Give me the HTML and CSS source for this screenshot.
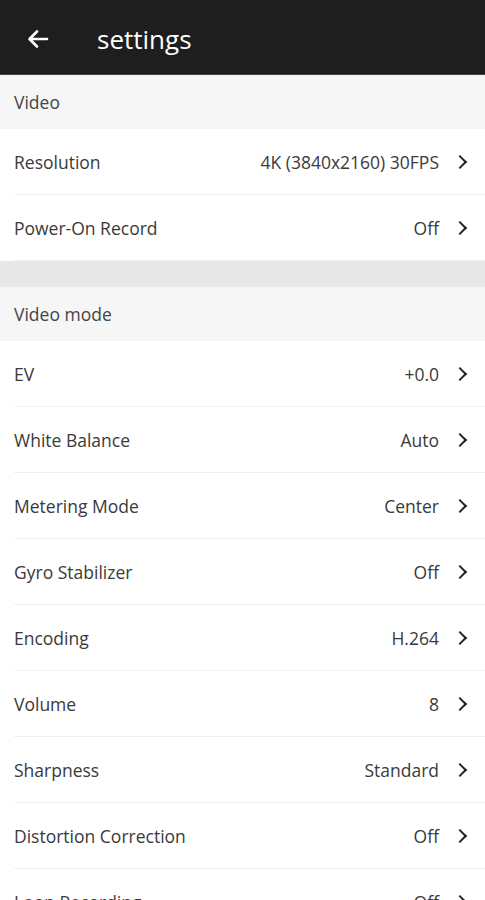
FILE: index.html
```html
<!DOCTYPE html>
<html lang="en">
  <head>
    <meta charset="UTF-8" />
    <meta name="viewport" content="width=device-width, initial-scale=1" />
    <title>settings</title>
    <link rel="stylesheet" href="styles.css">
  </head>
  <body>
    <header>
      <svg class="back" width="24" height="24" viewBox="0 0 24 24">
        <path d="M21 12H4M11 4.5L3.5 12L11 19.5" fill="none" stroke="#fff" stroke-width="2.6" stroke-linecap="round" stroke-linejoin="round" />
      </svg>
      <h1>settings</h1>
    </header>

    <div class="section">Video</div>
    <div class="row"><span class="label">Resolution</span><span class="value">4K (3840x2160) 30FPS</span><i class="chev"></i></div>
    <div class="row"><span class="label">Power-On Record</span><span class="value">Off</span><i class="chev"></i></div>

    <div class="gap"></div>

    <div class="section">Video mode</div>
    <div class="row"><span class="label">EV</span><span class="value">+0.0</span><i class="chev"></i></div>
    <div class="row"><span class="label">White Balance</span><span class="value">Auto</span><i class="chev"></i></div>
    <div class="row"><span class="label">Metering Mode</span><span class="value">Center</span><i class="chev"></i></div>
    <div class="row"><span class="label">Gyro Stabilizer</span><span class="value">Off</span><i class="chev"></i></div>
    <div class="row"><span class="label">Encoding</span><span class="value">H.264</span><i class="chev"></i></div>
    <div class="row"><span class="label">Volume</span><span class="value">8</span><i class="chev"></i></div>
    <div class="row"><span class="label">Sharpness</span><span class="value">Standard</span><i class="chev"></i></div>
    <div class="row"><span class="label">Distortion Correction</span><span class="value">Off</span><i class="chev"></i></div>
    <div class="row"><span class="label">Loop Recording</span><span class="value">Off</span><i class="chev"></i></div>
  </body>
</html>
```

FILE: styles.css
```css
body {
  font-family: "Open Sans", sans-serif;
  margin: 0;
  padding: 0;
  background: #fff;
  color: #333;
}

header {
  background: #1e1e1e;
  height: 75px;
  border-bottom: 1px solid #444;
  box-sizing: border-box;
  display: flex;
  align-items: center;
  padding: 4px 0 0 26px;
  gap: 47px;
}

.back {
  display: block;
}

h1 {
  margin: 0;
  color: #fff;
  font-size: 26px;
  font-weight: 500;
}

.section {
  background: #f6f6f6;
  height: 54px;
  display: flex;
  align-items: center;
  padding-left: 14px;
  font-size: 17.5px;
  color: #444;
}

.gap {
  height: 26px;
  background: #e8e8e8;
}

.row {
  height: 66px;
  display: flex;
  align-items: center;
  margin-left: 14px;
  padding-right: 20px;
  border-bottom: 1px solid #f0f0f0;
  box-sizing: border-box;
  font-size: 17.5px;
}

.row:last-child {
  border-bottom: none;
}

.label {
  flex: 1;
  color: #3a3a3a;
}

.value {
  color: #3a3a3a;
}

.chev {
  width: 8px;
  height: 8px;
  border-right: 2.4px solid #222;
  border-bottom: 2.4px solid #222;
  transform: rotate(-45deg);
  margin-left: 16px;
}
```
